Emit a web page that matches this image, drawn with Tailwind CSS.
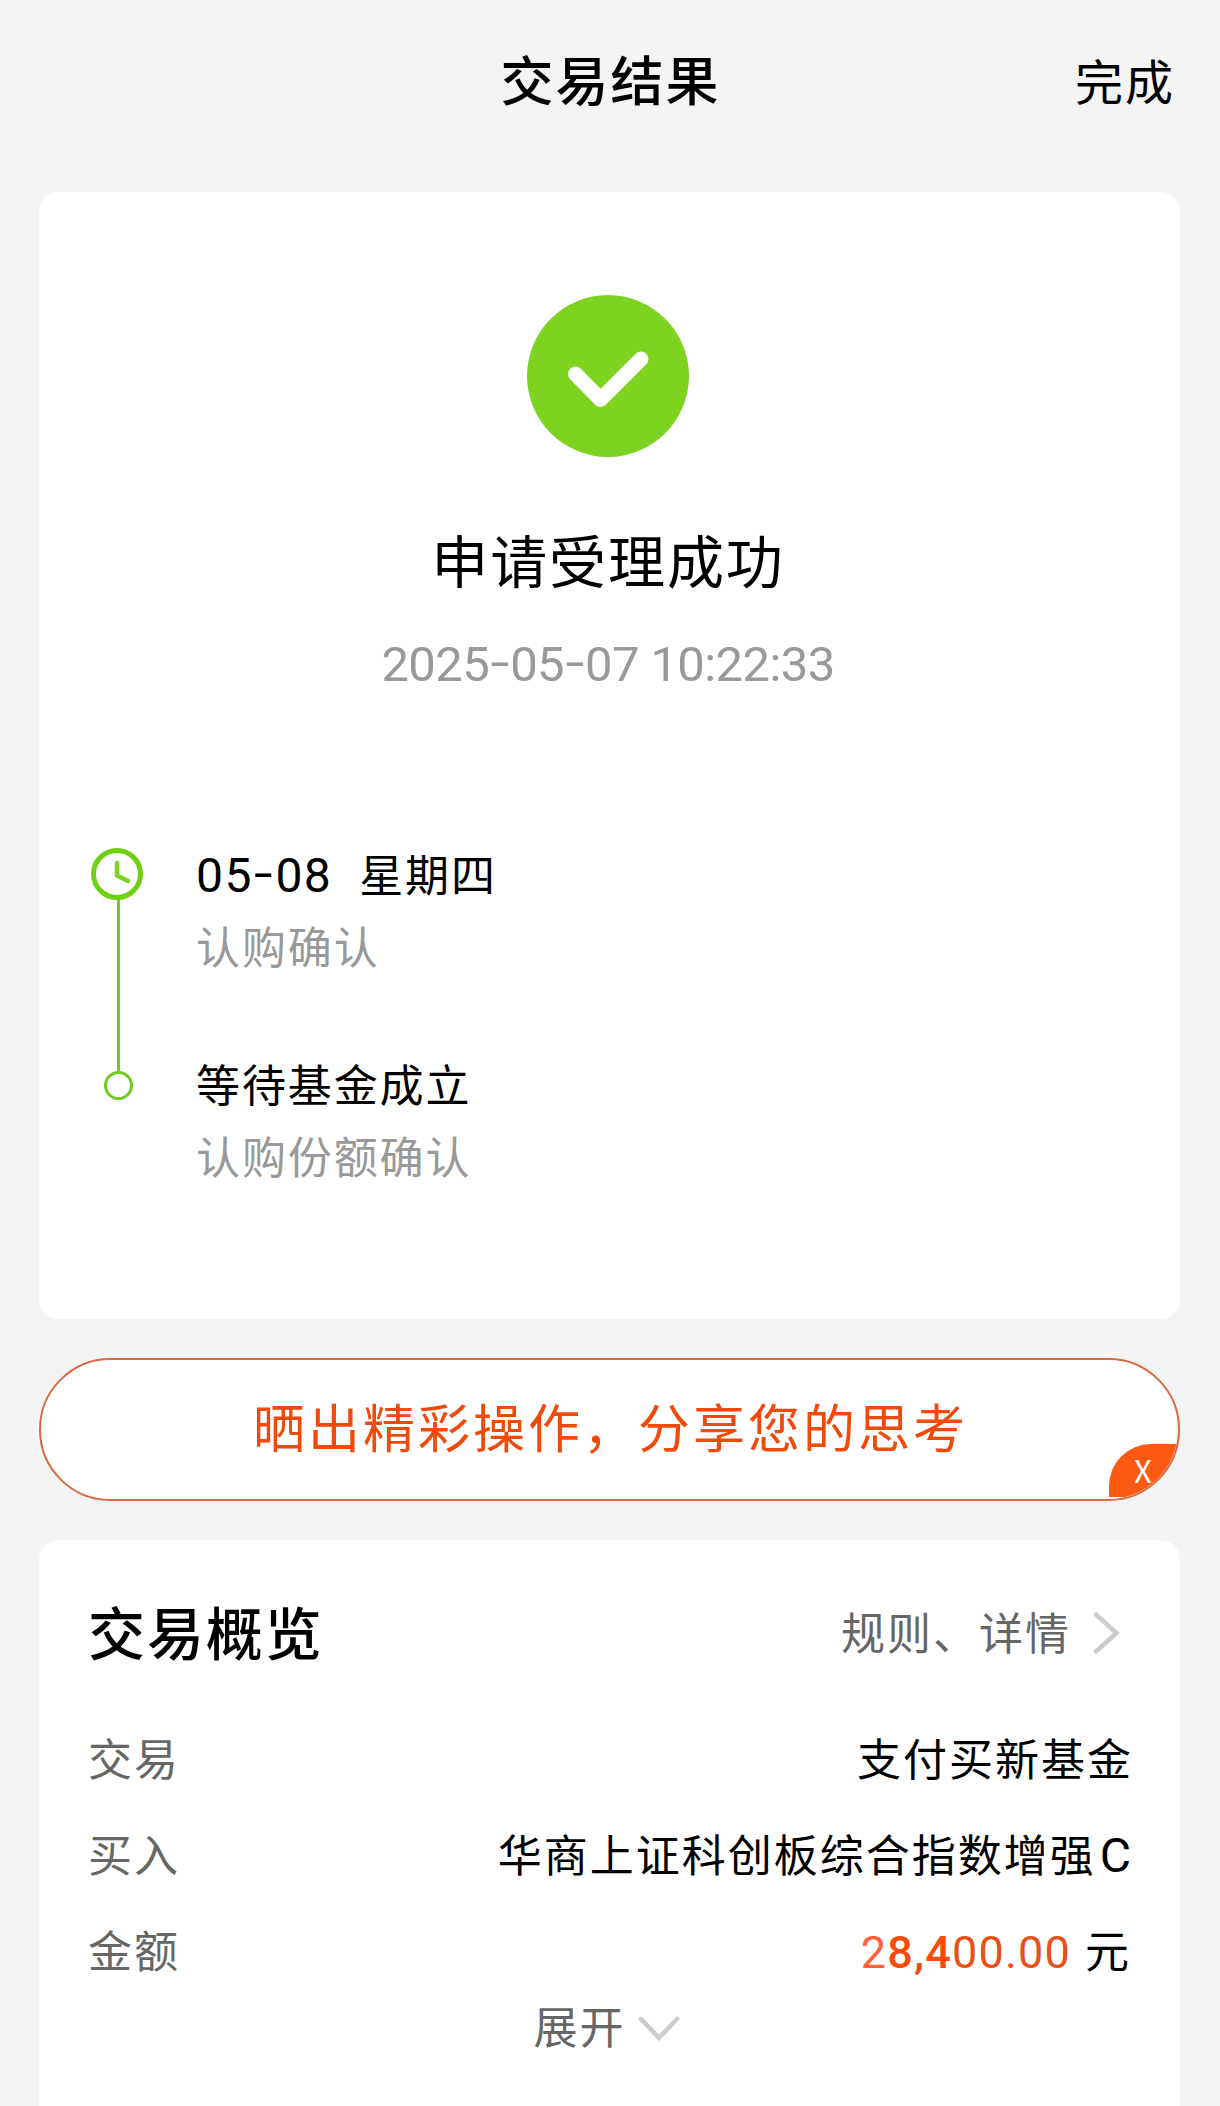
<!DOCTYPE html>
<html lang="zh-CN">
<head>
    <meta charset="UTF-8">
    <meta name="viewport" content="width=device-width, initial-scale=1.0">
    <title>交易结果</title>
    <script src="https://cdn.jsdelivr.net/npm/@tailwindcss/browser@4"></script>
</head>
<body class="bg-[#f4f4f4] h-[2106px] overflow-hidden text-black font-['Noto_Sans_CJK_SC',sans-serif]">

    <!-- Header -->
    <header class="grid grid-cols-3 items-center h-[157px] pr-[45px] pl-[46px]">
        <div></div>
        <h1 class="text-[53px] font-medium tracking-[2px] text-center">交易结果</h1>
        <button class="text-[48px] tracking-[2px] text-right">完成</button>
    </header>

    <!-- Result -->
    <section class="mt-[35px] ml-[39px] mr-[40px] h-[1127px] pt-[103px] bg-white rounded-[20px]">
        <div class="flex flex-col items-center pr-[3px]">
            <svg class="size-[162px]" viewBox="0 0 162 162" fill="none">
                <circle cx="81" cy="81" r="81" fill="#7ed321"/>
                <path d="M48.5 79 L73.5 104.5 L114 64" stroke="#fff" stroke-width="15" stroke-linecap="round" stroke-linejoin="round"/>
            </svg>
            <h2 class="mt-[61px] text-[57px] leading-[80px] tracking-[1.9px]">申请受理成功</h2>
            <p class="mt-[37px] text-[49px] leading-[60px] tracking-[-0.6px] text-[#999] font-[Roboto,sans-serif] whitespace-nowrap">2025<span class="inline-block scale-x-140 -translate-y-[2px] mx-[4px]">-</span>05<span class="inline-block scale-x-140 -translate-y-[2px] mx-[4px]">-</span>07 10:22:33</p>
        </div>

        <!-- Timeline -->
        <div class="flex gap-[53px] mt-[141px] pl-[52px]">
            <svg class="w-[52px] h-[253px] mt-[12px] shrink-0" viewBox="0 0 52 253" fill="none">
                <path d="M27.5 51V224" stroke="#70cb1f" stroke-width="3"/>
                <circle cx="26" cy="26" r="23.5" stroke="#70d010" stroke-width="5"/>
                <path d="M26 15V27.5L37 33" stroke="#7ed321" stroke-width="4.5" stroke-linecap="round" stroke-linejoin="round"/>
                <circle cx="27.5" cy="237.5" r="13" stroke="#70cb1f" stroke-width="3"/>
            </svg>
            <div class="flex flex-col gap-[66px] pt-px text-[44px] leading-[72px] tracking-[1.9px]">
                <div>
                    <p class="flex items-center h-[72px]"><span class="text-[48px] mt-[6px] tracking-[1.4px] font-[Roboto,sans-serif]">05<span class="inline-block scale-x-140 -translate-y-[2px] mx-[4px]">-</span>08</span><span class="ml-[27px]">星期四</span></p>
                    <p class="text-[#999]">认购确认</p>
                </div>
                <div>
                    <p>等待基金成立</p>
                    <p class="text-[#999]">认购份额确认</p>
                </div>
            </div>
        </div>
    </section>

    <!-- Share banner -->
    <section class="relative flex items-center justify-center mt-[39px] ml-[39px] mr-[40px] h-[143px] pl-[2px] pb-[7px] bg-white border-2 border-[#d9693f] rounded-full overflow-hidden">
        <p class="text-[52px] tracking-[3px] text-[#f04a0a] whitespace-nowrap">晒出精彩操作，分享您的思考</p>
        <button class="absolute left-[1068px] top-[84px] w-[73px] h-[53px] bg-[#fc5a12] rounded-tl-[42px] text-white text-[31px] leading-[51px] text-left pl-[25px] pb-[2px] font-['Noto_Sans_CJK_SC',sans-serif]">X</button>
    </section>

    <!-- Overview -->
    <section class="mt-[39px] ml-[39px] mr-[40px] h-[586px] pt-[51px] pl-[49px] pr-[47px] bg-white rounded-[20px]">
        <div class="flex items-center justify-between h-[80px]">
            <h2 class="text-[57px] font-medium tracking-[1.9px]">交易概览</h2>
            <div class="flex items-center gap-[21px] pr-[12px] text-[44px] tracking-[2px] text-[#666]">
                规则、详情
                <svg class="w-[29px] h-[46px] mt-[3px]" viewBox="0 0 29 46" fill="none">
                    <path d="M4 4.5L24.5 23L4 41.5" stroke="#ccc" stroke-width="4.5" stroke-linecap="round"/>
                </svg>
            </div>
        </div>
        <dl class="mt-[38px] text-[44px] leading-[96px] tracking-[2px]">
            <div class="flex justify-between h-[96px]">
                <dt class="text-[#666]">交易</dt>
                <dd>支付买新基金</dd>
            </div>
            <div class="flex justify-between h-[96px]">
                <dt class="text-[#666]">买入</dt>
                <dd>华商上证科创板综合指数增强<span class="ml-[4px] text-[48px] leading-none font-[Roboto,sans-serif]">C</span></dd>
            </div>
            <div class="flex justify-between h-[96px]">
                <dt class="text-[#666]">金额</dt>
                <dd class="pr-[2px]"><span class="mr-[14px] text-[45px] leading-none tracking-[1.2px] font-[Roboto,sans-serif] text-[#ea4f16]"><span class="text-[#ff6038]">2</span><span class="font-medium"><span class="text-[#fc4a0c]">8</span>,<span class="text-[#fc4a0c]">4</span></span>00.00</span>元</dd>
            </div>
        </dl>
        <div class="flex items-center justify-center gap-[11px] h-[56px] pr-[7px] text-[44px] tracking-[2px] text-[#666]">
            展开
            <svg class="w-[44px] h-[28px] mt-[7px]" viewBox="0 0 44 28" fill="none">
                <path d="M4 4L22 23L40 4" stroke="#ccc" stroke-width="4.5" stroke-linecap="round"/>
            </svg>
        </div>
    </section>

</body>
</html>
